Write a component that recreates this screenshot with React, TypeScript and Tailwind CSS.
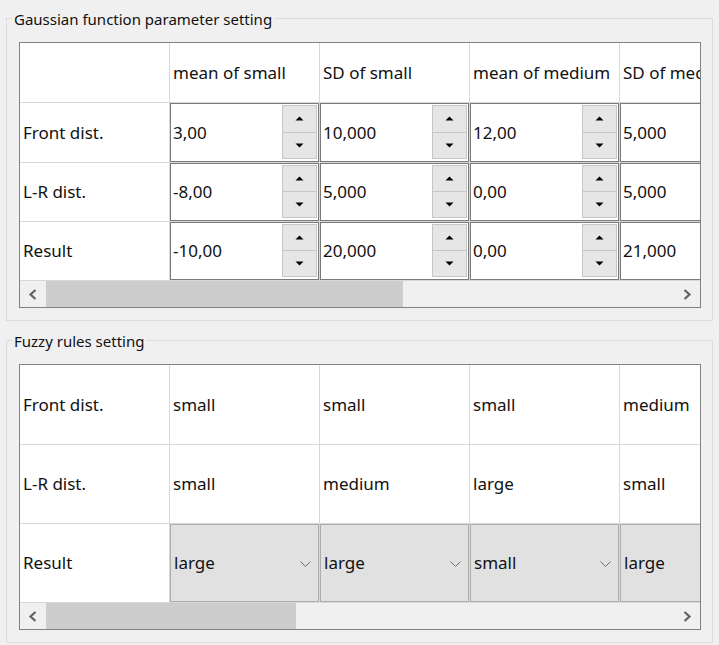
import React from 'react';

const font = { fontFamily: '"Noto Sans", "Open Sans", sans-serif' };

function SpinArrows() {
  return (
    <div className="absolute right-[1px] top-[1px] bottom-[2px] w-[35px] flex flex-col">
      <div className="flex-1 border border-[#c6c6c6] bg-[#e6e6e6] flex items-center justify-center">
        <svg width="9" height="5" viewBox="0 0 9 5"><path d="M0.5 4.5 L4.5 0.5 L8.5 4.5 Z" fill="#000" /></svg>
      </div>
      <div className="flex-1 border border-t-0 border-[#c6c6c6] bg-[#e6e6e6] flex items-center justify-center">
        <svg width="9" height="5" viewBox="0 0 9 5"><path d="M0.5 0.5 L4.5 4.5 L8.5 0.5 Z" fill="#000" /></svg>
      </div>
    </div>
  );
}

function SpinCell({ v, last }: { v: string; last?: boolean }) {
  return (
    <div className={`${last ? 'w-[160px]' : 'w-[150px]'} shrink-0 h-full border-r border-[#d8d8d8]`}>
      <div className="relative h-full border border-[#7a7a7a] bg-white flex items-center pl-[2px] text-[17px] text-[#111]">
        {v}
        {!last && <SpinArrows />}
      </div>
    </div>
  );
}

function TextCell({ v, w = 'w-[150px]' }: { v: string; w?: string }) {
  return (
    <div className={`${w} shrink-0 h-full border-r border-[#d8d8d8] flex items-center pl-[3px] text-[17px] text-[#111] bg-white whitespace-nowrap overflow-hidden`}>
      {v}
    </div>
  );
}

function ComboCell({ v, last }: { v: string; last?: boolean }) {
  return (
    <div className={`${last ? 'w-[160px]' : 'w-[150px]'} shrink-0 h-full border-r border-[#d8d8d8] bg-white`}>
      <div className="relative h-full border border-[#adadad] bg-[#e1e1e1] flex items-center pl-[3px] text-[17px] text-[#111]">
        {v}
        {!last && (
          <svg className="absolute right-[7px] top-[36px]" width="11" height="6" viewBox="0 0 11 6">
            <path d="M0.5 0.5 L5.5 5.5 L10.5 0.5" fill="none" stroke="#6d6d6d" strokeWidth="1" />
          </svg>
        )}
      </div>
    </div>
  );
}

function ScrollBar({ thumb }: { thumb: number }) {
  return (
    <div className="h-[26px] flex bg-[#f0f0f0]">
      <div className="w-[26px] shrink-0 flex items-center justify-center">
        <svg width="10" height="11" viewBox="0 0 10 11"><path d="M7.5 1 L2.5 5.5 L7.5 10" fill="none" stroke="#606060" strokeWidth="2.2" /></svg>
      </div>
      <div className="flex-1">
        <div className="h-full bg-[#cdcdcd]" style={{ width: thumb }} />
      </div>
      <div className="w-[26px] shrink-0 flex items-center justify-center">
        <svg width="10" height="11" viewBox="0 0 10 11"><path d="M2.5 1 L7.5 5.5 L2.5 10" fill="none" stroke="#606060" strokeWidth="2.2" /></svg>
      </div>
    </div>
  );
}

function GroupBox({ title, children, className }: { title: string; children: React.ReactNode; className?: string }) {
  return (
    <div className={`relative ml-[6px] w-[707px] border border-[#dcdcdc] pl-[12px] pr-[11px] pt-[23px] pb-[12px] ${className ?? ''}`}>
      <div className="absolute left-[5px] top-[-12px] px-[2px] bg-[#f0f0f0] text-[15px] text-[#111] leading-[24px]">
        {title}
      </div>
      {children}
    </div>
  );
}

export default function App() {
  const gauss = [
    { label: 'Front dist.', h: 'h-[60px]', v: ['3,00', '10,000', '12,00', '5,000'] },
    { label: 'L-R dist.', h: 'h-[59px]', v: ['-8,00', '5,000', '0,00', '5,000'] },
    { label: 'Result', h: 'h-[59px]', v: ['-10,00', '20,000', '0,00', '21,000'] },
  ];
  const headers = ['mean of small', 'SD of small', 'mean of medium', 'SD of medium'];
  const fuzzy = [
    { label: 'Front dist.', h: 'h-[80px]', v: ['small', 'small', 'small', 'medium'] },
    { label: 'L-R dist.', h: 'h-[79px]', v: ['small', 'medium', 'large', 'small'] },
  ];
  const result = ['large', 'large', 'small', 'large'];

  return (
    <div className="w-[719px] h-[645px] bg-[#f0f0f0] pt-[18px] overflow-hidden" style={font}>
      <GroupBox title="Gaussian function parameter setting">
        <div className="w-[682px] border border-[#828282] bg-white">
          <div className="w-[680px] overflow-hidden">
            <div className="h-[60px] flex border-b border-[#d8d8d8] w-[770px]">
              <TextCell v="" />
              {headers.map((h, i) => (
                <TextCell key={i} v={h} w={i === 3 ? 'w-[160px]' : 'w-[150px]'} />
              ))}
            </div>
            {gauss.map((r, ri) => (
              <div key={ri} className={`${r.h} flex border-b border-[#d8d8d8] w-[770px]`}>
                <TextCell v={r.label} />
                {r.v.map((v, i) => (
                  <SpinCell key={i} v={v} last={i === 3} />
                ))}
              </div>
            ))}
          </div>
          <ScrollBar thumb={357} />
        </div>
      </GroupBox>

      <GroupBox title="Fuzzy rules setting" className="mt-[19px]">
        <div className="w-[682px] border border-[#828282] bg-white">
          <div className="w-[680px] overflow-hidden">
            {fuzzy.map((r, ri) => (
              <div key={ri} className={`${r.h} flex border-b border-[#d8d8d8] w-[770px]`}>
                <TextCell v={r.label} />
                {r.v.map((v, i) => (
                  <TextCell key={i} v={v} w={i === 3 ? 'w-[160px]' : 'w-[150px]'} />
                ))}
              </div>
            ))}
            <div className="h-[79px] flex border-b border-[#d8d8d8] w-[770px]">
              <TextCell v="Result" />
              {result.map((v, i) => (
                <ComboCell key={i} v={v} last={i === 3} />
              ))}
            </div>
          </div>
          <ScrollBar thumb={250} />
        </div>
      </GroupBox>
    </div>
  );
}
